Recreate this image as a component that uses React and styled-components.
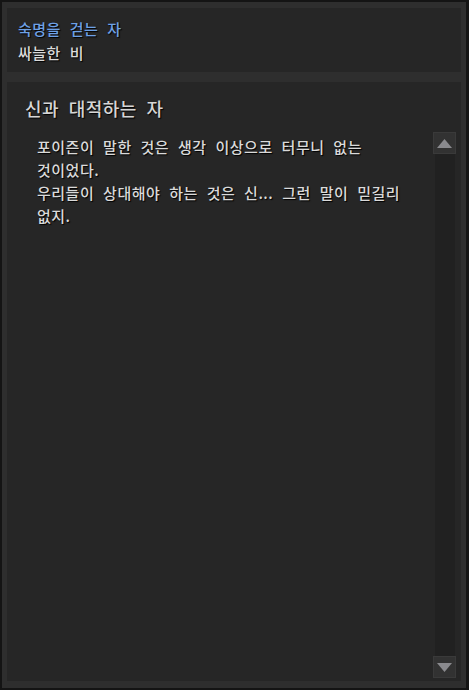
import React from "react";
import styled, { createGlobalStyle } from "styled-components";

const Global = createGlobalStyle`
  html, body { margin: 0; padding: 0; background: #121212; }
  body { font-family: "Noto Sans CJK KR", "Noto Sans", sans-serif; }
  * { box-sizing: border-box; }
`;

const Frame = styled.div`
  width: 469px;
  height: 690px;
  background: #2e2e2e;
  border-style: solid;
  border-color: #141414;
  border-width: 2px 3px 2px 2px;
  padding: 6px 5px 7px 5px;
  display: flex;
  flex-direction: column;
  gap: 10px;
`;

const Panel = styled.div`
  background: #262626;
  display: flex;
  flex-direction: column;
`;

const InfoPanel = styled(Panel)`
  height: 64px;
  padding: 9px 11px 0;
`;

const Line = styled.div`
  font-size: 15px;
  font-weight: 500;
  line-height: 24px;
  letter-spacing: 0.5px;
  word-spacing: 5px;
  color: ${(p) => (p.$accent ? "#6ea1e6" : "#dadada")};
  text-shadow: 1px 1px 1px #000;
  white-space: nowrap;
`;

const StoryPanel = styled(Panel)`
  flex: 1;
  min-height: 0;
  padding: 14px 5px 3px 0;
`;

const Title = styled.div`
  font-size: 18px;
  font-weight: 500;
  line-height: 24px;
  letter-spacing: 0.5px;
  word-spacing: 5px;
  color: #d6d6d6;
  text-shadow: 1px 1px 1px #000;
  padding-left: 18px;
  margin-bottom: 12px;
`;

const Body = styled.div`
  flex: 1;
  min-height: 0;
  display: flex;
`;

const Text = styled.div`
  flex: 1;
  padding: 3px 0 0 30px;
  font-size: 15px;
  font-weight: 500;
  line-height: 23px;
  letter-spacing: 0.5px;
  word-spacing: 5px;
  color: #dadada;
  text-shadow: 1px 1px 1px #000;
`;

const Para = styled.div`
  width: 380px;
  word-break: keep-all;
`;

const Scrollbar = styled.div`
  width: 23px;
  display: flex;
  flex-direction: column;
  align-items: center;
`;

const Track = styled.div`
  flex: 1;
  width: 20px;
  background: #212121;
`;

const ArrowButton = styled.div`
  width: 23px;
  height: 22px;
  background: #323232;
  border: 1px solid #3a3a3a;
  display: flex;
  align-items: center;
  justify-content: center;
`;

const Arrow = ({ down }) => (
  <svg width="15" height="9" viewBox="0 0 15 9">
    {down ? (
      <polygon points="0,0 15,0 7.5,9" fill="#8a8a8e" />
    ) : (
      <polygon points="7.5,0 15,9 0,9" fill="#8a8a8e" />
    )}
  </svg>
);

export default function App() {
  return (
    <>
      <Global />
      <Frame>
        <InfoPanel>
          <Line $accent>숙명을 걷는 자</Line>
          <Line>싸늘한 비</Line>
        </InfoPanel>
        <StoryPanel>
          <Title>신과 대적하는 자</Title>
          <Body>
            <Text>
              <Para>포이즌이 말한 것은 생각 이상으로 터무니 없는 것이었다.</Para>
              <Para>우리들이 상대해야 하는 것은 신... 그런 말이 믿길리 없지.</Para>
            </Text>
            <Scrollbar>
              <ArrowButton>
                <Arrow />
              </ArrowButton>
              <Track />
              <ArrowButton>
                <Arrow down />
              </ArrowButton>
            </Scrollbar>
          </Body>
        </StoryPanel>
      </Frame>
    </>
  );
}
